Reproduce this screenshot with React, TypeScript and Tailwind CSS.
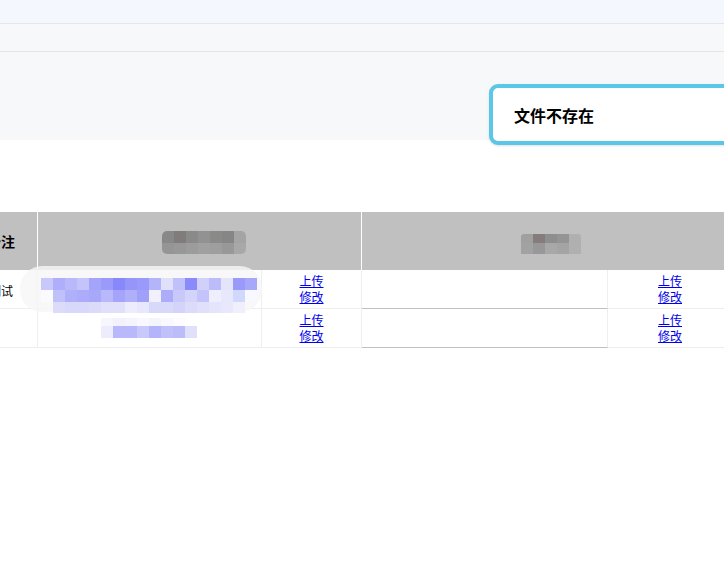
import React from 'react';

const row1Line1 = [
  'bg-[#c8c8fa]', 'bg-[#aeaefa]', 'bg-[#b8b8fa]', 'bg-[#c4c4fa]', 'bg-[#a4a4fa]', 'bg-[#9a9afa]',
  'bg-[#8888fa]', 'bg-[#9696fa]', 'bg-[#9a9afa]', 'bg-[#b4b4fa]', 'bg-[#e0e0fa]', 'bg-[#c0c0fa]',
  'bg-[#8a8afa]', 'bg-[#d0d0fa]', 'bg-[#bcbcfa]', 'bg-[#e4e4fa]', 'bg-[#9a9afa]', 'bg-[#a8a8fa]',
];
const row1Line2 = [
  'bg-[#fafaff]', 'bg-[#c0c0fa]', 'bg-[#b0b0fa]', 'bg-[#acacfa]', 'bg-[#a8a8fa]', 'bg-[#b8b8fa]',
  'bg-[#a4a4fa]', 'bg-[#b0b0fa]', 'bg-[#a0a0fa]', 'bg-[#f0f0ff]', 'bg-[#acacfa]', 'bg-[#c8c8fa]',
  'bg-[#d4d4fa]', 'bg-[#c4c4fa]', 'bg-[#eeeeff]', 'bg-[#e8e8fc]', 'bg-[#d0d8fc]', 'bg-[#f8f8ff]',
];
const row1Line3 = [
  'bg-[#dcdcfa]', 'bg-[#d8d8fa]', 'bg-[#d8d8fa]', 'bg-[#dcdcfa]', 'bg-[#e0e0fa]', 'bg-[#e0e0fa]',
  'bg-[#ececfc]', 'bg-[#e8e8fc]', 'bg-[#d8d8fa]', 'bg-[#d8d8fa]', 'bg-[#d4d4fa]', 'bg-[#dcdcfa]',
  'bg-[#e0e0fa]', 'bg-[#e4e4fc]', 'bg-[#e8e8fc]', 'bg-[#f0f0fc]',
];
const row2Line1 = ['bg-[#f6f6fd]', 'bg-[#f2f2fc]', 'bg-[#f4f4fd]', 'bg-[#f8f8fe]', 'bg-[#f4f4fd]', 'bg-[#f8f8fe]', 'bg-[#fcfcff]'];
const row2Line2 = ['bg-[#ececfc]', 'bg-[#b8b8fa]', 'bg-[#b8b8fa]', 'bg-[#c8c8fa]', 'bg-[#b4b4fa]', 'bg-[#c0c0fa]', 'bg-[#bcbcfa]', 'bg-[#e0e0fa]'];

const head2Line1 = ['bg-[#888888]', 'bg-[#807c7c]', 'bg-[#8a8a8a]', 'bg-[#929292]', 'bg-[#8a8a88]', 'bg-[#868686]', 'bg-[#a4a4a4]'];
const head2Line2 = ['bg-[#959595]', 'bg-[#989898]', 'bg-[#9c9c9c]', 'bg-[#a0a0a0]', 'bg-[#9e9e9e]', 'bg-[#989898]', 'bg-[#a8a8a8]'];
const head3Line1 = ['bg-[#a0a0a0]', 'bg-[#867c7c]', 'bg-[#8e8e8e]', 'bg-[#949494]', 'bg-[#b0b0b0]'];
const head3Line2 = ['bg-[#a2a2a2]', 'bg-[#989898]', 'bg-[#a8a8a8]', 'bg-[#a4a4a4]', 'bg-[#b0b0b0]'];

const PixLine = ({ cells, h }: { cells: string[]; h: string }) => (
  <div className={`flex ${h}`}>
    {cells.map((c, i) => (
      <div key={i} className={`w-[12px] ${c}`} />
    ))}
  </div>
);

const Links = () => (
  <div className="flex flex-col items-center justify-center text-[12px] leading-[16px] text-[#0000ee]">
    <a href="#" className="underline">上传</a>
    <a href="#" className="underline">修改</a>
  </div>
);

const BodyRow = ({ label }: { label: string }) => (
  <div className="flex h-[39px] text-[12px] text-black">
    <div className="w-[73px] shrink-0 flex items-center justify-center pt-[3px] border-r border-b border-[#eeeeee]">{label}</div>
    <div className="w-[224px] shrink-0 border-r border-b border-[#eeeeee]" />
    <div className="w-[100px] shrink-0 flex items-center justify-center border-r border-b border-[#eeeeee]">
      <Links />
    </div>
    <div className="w-[246px] shrink-0 border-r border-[#eeeeee] border-b border-b-[#c0c0c0]" />
    <div className="w-[124px] shrink-0 flex items-center justify-center border-b border-[#eeeeee]">
      <Links />
    </div>
  </div>
);

export default function App() {
  return (
    <div className="relative min-h-[578px] w-full overflow-hidden bg-white font-['Noto_Sans_CJK_SC','Noto_Sans',sans-serif]">
      <div className="h-[24px] bg-[#f4f7fe] border-b border-[#e6e6e6]" />
      <div className="h-[28px] bg-[#f7f8fa] border-b border-[#e6e6e6]" />
      <div className="h-[88px] bg-[#f7f8fa]" />
      <div className="h-[72px]" />

      <div className="ml-[-35px] flex flex-col">
        <div className="flex h-[58px] bg-[#c0c0c0] text-[14px] font-bold text-black">
          <div className="w-[73px] shrink-0 flex items-center justify-center border-r border-white">备注</div>
          <div className="w-[324px] shrink-0 flex items-center justify-center border-r border-white">
            <div className="ml-[8px] mt-[2px] flex flex-col overflow-hidden rounded-[5px]">
              <PixLine cells={head2Line1} h="h-[12px]" />
              <PixLine cells={head2Line2} h="h-[11px]" />
            </div>
          </div>
          <div className="w-[380px] shrink-0 flex items-center">
            <div className="ml-[159px] mt-[6px] flex flex-col overflow-hidden rounded-t-[3px]">
              <PixLine cells={head3Line1} h="h-[9px]" />
              <PixLine cells={head3Line2} h="h-[11px]" />
            </div>
          </div>
        </div>
        <BodyRow label="测试" />
        <BodyRow label="" />
      </div>

      {/* redacted content over the first rows */}
      <div className="absolute left-[20px] top-[266px] h-[46px] w-[242px] rounded-[22px] bg-[#f6f6f8] opacity-80" />
      <div className="absolute left-[41px] top-[278px] flex flex-col">
        <PixLine cells={row1Line1} h="h-[12px]" />
        <PixLine cells={row1Line2} h="h-[12px]" />
        <div className="ml-[12px]">
          <PixLine cells={row1Line3} h="h-[11px]" />
        </div>
      </div>
      <div className="absolute left-[101px] top-[318px] flex flex-col">
        <PixLine cells={row2Line1} h="h-[8px]" />
        <PixLine cells={row2Line2} h="h-[12px]" />
      </div>

      {/* toast */}
      <div className="absolute left-[489px] top-[84px] flex h-[61px] w-[270px] items-center rounded-[9px] border-4 border-[#5bc6e6] bg-white pl-[21px] shadow-sm">
        <span className="text-[16px] font-bold text-black">文件不存在</span>
      </div>
    </div>
  );
}
